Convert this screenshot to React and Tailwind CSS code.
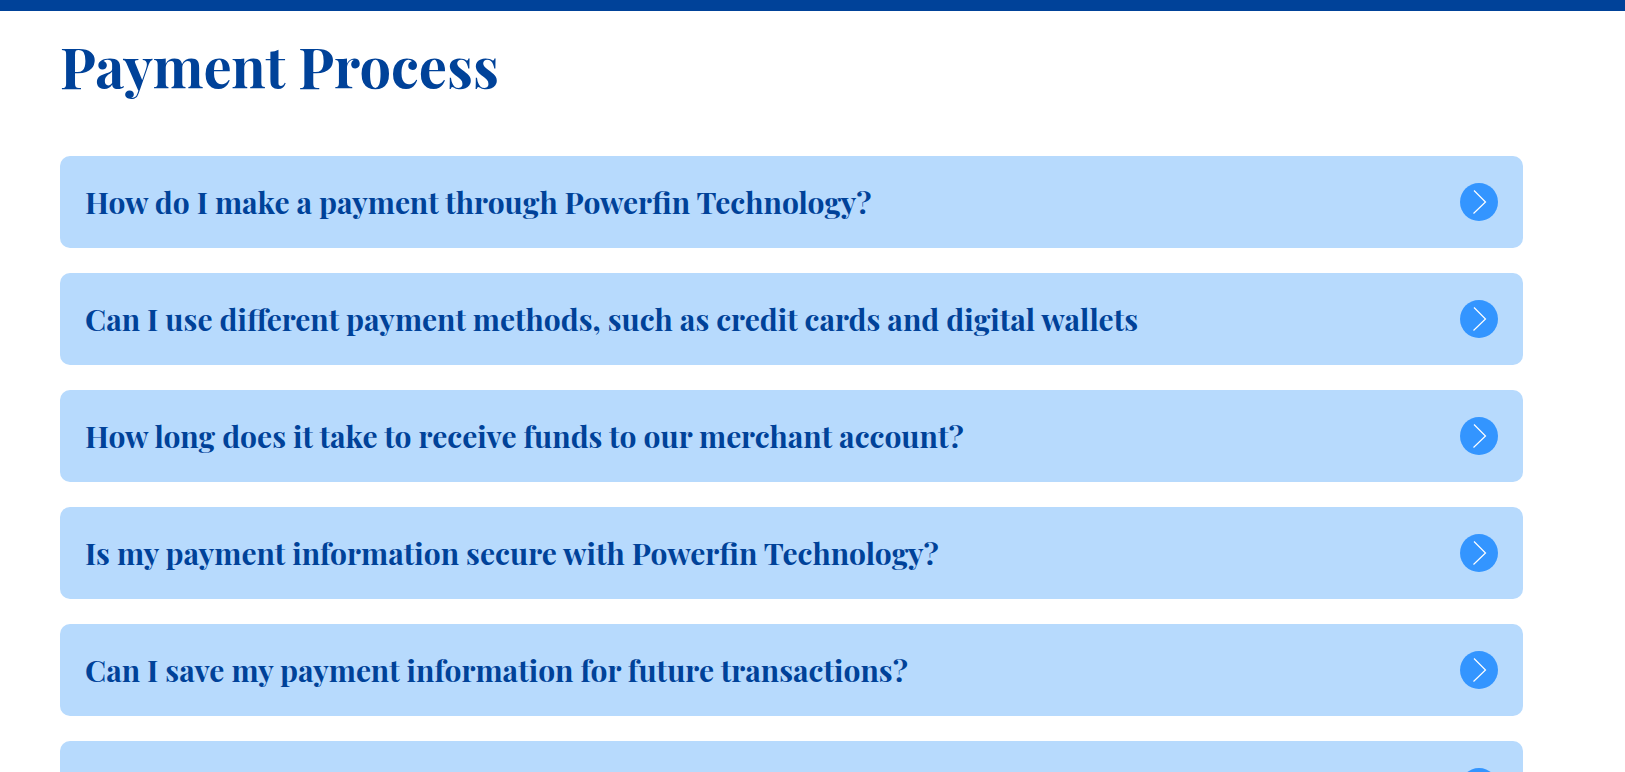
const questions = [
  "How do I make a payment through Powerfin Technology?",
  "Can I use different payment methods, such as credit cards and digital wallets",
  "How long does it take to receive funds to our merchant account?",
  "Is my payment information secure with Powerfin Technology?",
  "Can I save my payment information for future transactions?",
  "",
];

function Arrow() {
  return (
    <svg viewBox="0 0 38 38" className="size-[38px] shrink-0" aria-hidden="true">
      <circle cx="19" cy="19" r="19" fill="#3395ff" />
      <path d="M14 7.5 L25.5 19 L13.5 30.5" fill="none" stroke="#fff" strokeWidth="1.2" />
    </svg>
  );
}

function Question({ text }) {
  return (
    <li>
      <button
        type="button"
        aria-expanded="false"
        aria-label={text || "More questions"}
        className="flex min-h-[92px] w-full cursor-pointer items-center justify-between gap-6 rounded-[10px] bg-[#b7dafd] px-[25px] py-5 text-left text-[30px] leading-10 font-bold text-[#004299]"
      >
        <span>{text}</span>
        <Arrow />
      </button>
    </li>
  );
}

export default function App() {
  return (
    <div className="h-screen overflow-hidden bg-white font-['Playfair_Display','Liberation_Serif',serif]">
      <div className="h-[11px] bg-[#004299]" />
      <main className="w-[90%] ml-[60px] pt-5">
        <h1 className="text-[56px] leading-[70px] font-bold text-[#004299]">Payment Process</h1>
        <ul className="mt-[55px] flex flex-col gap-[25px]">
          {questions.map((q, i) => (
            <Question key={i} text={q} />
          ))}
        </ul>
      </main>
    </div>
  );
}
